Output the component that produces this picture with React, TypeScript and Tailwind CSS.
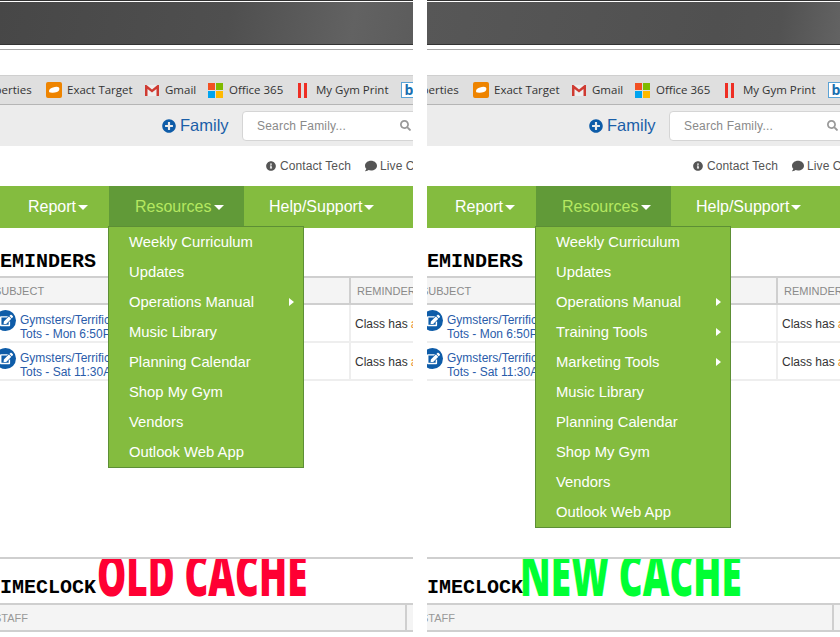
import { FaPlusCircle, FaSearch, FaInfoCircle, FaComment, FaEdit } from "react-icons/fa";

const oldItems = [
  ["Weekly Curriculum", false],
  ["Updates", false],
  ["Operations Manual", true],
  ["Music Library", false],
  ["Planning Calendar", false],
  ["Shop My Gym", false],
  ["Vendors", false],
  ["Outlook Web App", false],
] as const;

const newItems = [
  ["Weekly Curriculum", false],
  ["Updates", false],
  ["Operations Manual", true],
  ["Training Tools", true],
  ["Marketing Tools", true],
  ["Music Library", false],
  ["Planning Calendar", false],
  ["Shop My Gym", false],
  ["Vendors", false],
  ["Outlook Web App", false],
] as const;

function Caret() {
  return <span className="ml-[2px] mt-[1px] inline-block h-0 w-0 shrink-0 border-x-[5px] border-t-[5px] border-x-transparent border-t-white" />;
}

function Bookmarks() {
  return (
    <div className="flex h-[29px] items-center whitespace-nowrap border-b border-[#b5b5b5] bg-[#dfdfdf] text-[11.5px] text-[#333] font-['Open_Sans',sans-serif] [&>*]:shrink-0">
      <span className="ml-[-24px] w-[58px]">Properties</span>
      <span className="ml-[12px] flex h-[16px] w-[16px] items-center justify-center rounded-[2px] bg-[#ee8400]">
        <svg viewBox="0 0 16 16" className="h-[16px] w-[16px]">
          <path d="M3 9c0-2 2-3 4-3.500 2-.8 5-1 6 0 1 1.500 0 4-2 4.500-2 .8-5 1-6 .5C3.500 10.500 3 10 3 9z" fill="#fff" />
        </svg>
      </span>
      <span className="ml-[5px] w-[65px]">Exact Target</span>
      <svg viewBox="0 0 14 12" className="ml-[13px] h-[12px] w-[14px]">
        <path d="M0 1h14v11H0z" fill="#eee" />
        <path d="M0 1v11h2.500V5L7 8.500 11.500 5v7H14V1h-1.500L7 5.500 1.500 1z" fill="#cf3b32" />
      </svg>
      <span className="ml-[6px] w-[30px]">Gmail</span>
      <span className="ml-[13px] grid h-[15px] w-[15px] grid-cols-2 gap-[1px]">
        <span className="bg-[#f25022]" />
        <span className="bg-[#7fba00]" />
        <span className="bg-[#00a4ef]" />
        <span className="bg-[#ffb900]" />
      </span>
      <span className="ml-[6px] w-[54px]">Office 365</span>
      <span className="ml-[15px] flex h-[15px] w-[9px] justify-between">
        <span className="w-[3px] bg-[#ee2e24]" />
        <span className="w-[3px] bg-[#ee2e24]" />
      </span>
      <span className="ml-[9px] w-[72px]">My Gym Print</span>
      <span className="ml-[13px] flex h-[16px] w-[16px] items-center justify-center border border-[#5ba3d6] bg-white text-[14px] font-bold leading-none text-[#1a6fb0]">b</span>
    </div>
  );
}

function Row({ when }: { when: string }) {
  return (
    <div className="flex h-[38px] border-b-2 border-[#eeeeee] font-['Liberation_Sans',sans-serif]">
      <div className="flex w-[349px] shrink-0 items-start pt-[5px]">
        <span className="ml-[-5px] flex h-[21px] w-[21px] shrink-0 items-center justify-center rounded-full bg-[#0e5ca8] text-white">
          <FaEdit className="ml-[1px] h-[13px] w-[13px]" />
        </span>
        <span className="ml-[4px] mt-[3px] whitespace-nowrap text-[12px] leading-[14px] text-[#2a5caa]">
          Gymsters/Terrific
          <br />
          Tots - {when}
        </span>
      </div>
      <div className="flex flex-1 items-center whitespace-nowrap border-l-2 border-[#eeeeee] pl-[4px] pt-[2px] text-[12px] text-[#333]">
        Class has <span className="ml-[3px] text-[#e8912d]">a</span>
      </div>
    </div>
  );
}

function Panel({ bar, items, label, labelColor, labelLeft }: {
  bar: string;
  items: readonly (readonly [string, boolean])[];
  label: string;
  labelColor: string;
  labelLeft: string;
}) {
  return (
    <div className="h-[637px] w-[413px] shrink-0 overflow-hidden bg-white font-['Liberation_Sans',sans-serif]">
      <div className="h-[1px] bg-[#333]" />
      <div className="h-[1px] bg-white" />
      <div className={`h-[43px] border-b border-b-[#333] ${bar}`} />
      <div className="h-[30px] border-t-[4px] border-white">
        <div className="h-[1px] bg-[#aaaaaa]" />
      </div>
      <div className="h-[1px] bg-[#cfcfcf]" />
      <Bookmarks />
      <div className="flex h-[41px] items-center bg-[#ececec]">
        <div className="ml-[162px] flex shrink-0 items-center text-[#1a5ea8]">
          <FaPlusCircle className="h-[14px] w-[14px] shrink-0 text-[#0e5ca8]" />
          <span className="ml-[4px] w-[47px] whitespace-nowrap text-[16.5px] leading-none">Family</span>
        </div>
        <div className="ml-[15px] flex h-[30px] w-[183px] shrink-0 items-center justify-between rounded-[4px] border border-[#d5d5d5] bg-white pl-[14px] pr-[13px] text-[12px] tracking-[0.2px] text-[#8a8a8a]">
          <span>Search Family...</span>
          <FaSearch className="h-[11px] w-[11px] shrink-0 text-[#999]" />
        </div>
      </div>
      <div className="flex h-[40px] items-center whitespace-nowrap pl-[266px] text-[12px] tracking-[0.1px] text-[#555]">
        <FaInfoCircle className="h-[10px] w-[10px] shrink-0" />
        <span className="ml-[4px] w-[71px] shrink-0">Contact Tech</span>
        <FaComment className="ml-[14px] h-[12px] w-[12px] shrink-0" />
        <span className="ml-[3px]">Live Chat</span>
      </div>
      <div className="flex h-[42px] items-stretch whitespace-nowrap bg-[#84bc3f] text-[16px] text-white">
        <div className="flex w-[109px] shrink-0 items-center pl-[28px]">
          Report<Caret />
        </div>
        <div className="relative flex w-[135px] shrink-0 items-center bg-[#619a38] pl-[26px] text-[#b5e861]">
          Resources<span className="w-[1px]" /><Caret />
          <div className="absolute left-[-1px] top-[40px] z-10 w-[196px] border border-[#5d8f35] bg-[#84bc3f] text-[14.8px] text-white">
            {items.map(([name, sub]) => (
              <div key={name} className="flex h-[30px] items-center justify-between pl-[20px] pr-[9px]">
                <span>{name}</span>
                {sub && <span className="h-0 w-0 border-y-[4px] border-l-[5px] border-y-transparent border-l-white" />}
              </div>
            ))}
          </div>
        </div>
        <div className="flex items-center pl-[25px]">
          Help/Support<Caret />
        </div>
      </div>
      <div className="h-[48px] pt-[25px] font-['Liberation_Mono',monospace] text-[20px] font-bold leading-[18px] text-black">
        <div className="ml-[-12px]">REMINDERS</div>
      </div>
      <div className="flex h-[29px] items-center border-y-2 border-[#cfcfcf] bg-[#f4f4f4] text-[11px] text-[#8a8a8a]">
        <span className="ml-[-6px] w-[355px] shrink-0 pt-[2px]">SUBJECT</span>
        <span className="flex h-full items-center whitespace-nowrap border-l-2 border-[#cfcfcf] pl-[6px] pt-[2px]">REMINDER TYPE</span>
      </div>
      <Row when="Mon 6:50PM" />
      <Row when="Sat 11:30AM" />
      <div className="h-[176px]" />
      <div className="relative h-[46px] overflow-hidden border-t-2 border-[#cfcfcf]">
        <div className="ml-[-12px] pt-[20px] font-['Liberation_Mono',monospace] text-[20px] font-bold leading-[18px] text-black">TIMECLOCK</div>
        <div
          className={`absolute top-[-19px] origin-left scale-x-[0.635] whitespace-nowrap font-['Open_Sans',sans-serif] text-[58px] font-extrabold leading-[68px] ${labelLeft} ${labelColor}`}
        >
          {label}
        </div>
      </div>
      <div className="flex h-[29px] items-center border-y-2 border-[#cfcfcf] bg-[#f4f4f4] text-[11px] text-[#999]">
        <span className="ml-[-6px] w-[411px] shrink-0 pt-[2px]">STAFF</span>
        <span className="h-full border-l-2 border-[#cfcfcf]" />
      </div>
    </div>
  );
}

export default function App() {
  return (
    <div className="flex h-[637px] w-[840px] gap-[14px] overflow-hidden bg-white">
      <Panel
        bar="bg-[linear-gradient(100deg,#474747_0%,#4f4f4f_55%,#626262_85%,#5c5c5c_100%)]"
        items={oldItems}
        label="OLD CACHE"
        labelColor="text-[#ff0033]"
        labelLeft="left-[97px]"
      />
      <Panel
        bar="bg-[linear-gradient(100deg,#575757_0%,#505050_70%,#525252_85%,#636363_100%)]"
        items={newItems}
        label="NEW CACHE"
        labelColor="text-[#00ff33]"
        labelLeft="left-[93px]"
      />
    </div>
  );
}
